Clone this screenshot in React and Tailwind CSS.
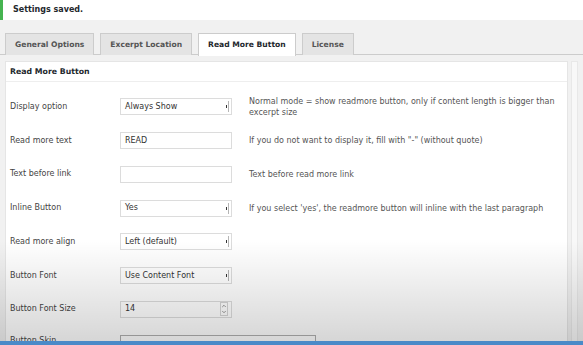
import { ChevronUp, ChevronDown } from 'lucide-react';

const tabs = [
  { label: 'General Options', active: false },
  { label: 'Excerpt Location', active: false },
  { label: 'Read More Button', active: true },
  { label: 'License', active: false }
];

const SelectBox = ({ value }) => (
  <div className="flex h-[17px] w-[112px] items-center justify-between border border-[#dcdcdc] bg-white pl-[4px] pr-[2px] text-[8px] text-[#333]">
    <span>{value}</span>
    <span className="flex h-[11px] w-[4px] items-center justify-center border-r border-[#b5b5b5]">
      <span className="h-[3px] w-[1.5px] bg-[#333]" />
    </span>
  </div>
);

const TextBox = ({ value }) => (
  <div className="flex h-[17px] w-[112px] items-center border border-[#dcdcdc] bg-white pl-[4px] text-[8px] text-[#333]">
    {value}
  </div>
);

const NumberBox = ({ value }) => (
  <div className="flex h-[17px] w-[112px] items-center justify-between border border-[#dcdcdc] bg-white pl-[4px] pr-[3px] text-[8px] text-[#333]">
    <span>{value}</span>
    <span className="flex flex-col items-center border border-[#d5d5d5] text-[#777]">
      <ChevronUp className="h-[6px] w-[6px]" strokeWidth={3} />
      <ChevronDown className="h-[6px] w-[6px]" strokeWidth={3} />
    </span>
  </div>
);

const rows = [
  { label: 'Display option', field: <SelectBox value="Always Show" />, desc: 'Normal mode = show readmore button, only if content length is bigger than excerpt size' },
  { label: 'Read more text', field: <TextBox value="READ" />, desc: 'If you do not want to display it, fill with "-" (without quote)' },
  { label: 'Text before link', field: <TextBox value="" />, desc: 'Text before read more link' },
  { label: 'Inline Button', field: <SelectBox value="Yes" />, desc: "If you select 'yes', the readmore button will inline with the last paragraph" },
  { label: 'Read more align', field: <SelectBox value="Left (default)" />, desc: '' },
  { label: 'Button Font', field: <SelectBox value="Use Content Font" />, desc: '' },
  { label: 'Button Font Size', field: <NumberBox value="14" />, desc: '' }
];

export default function App() {
  return (
    <div className="relative h-[345px] w-[583px] overflow-hidden bg-[#f1f1f1] font-['DejaVu_Sans',sans-serif]">
      {/* notice */}
      <div className="flex h-[20px] items-center border-l-[3px] border-[#46b450] bg-white pl-[10px] text-[8px] font-bold text-[#23282d]">
        Settings saved.
      </div>

      {/* tabs */}
      <div className="mt-[13px] flex h-[22px] gap-[6px] border-b border-[#cccccc] pl-[5px]">
        {tabs.map((t) => (
          <div
            key={t.label}
            className={`flex h-[22px] items-center border border-b-0 border-[#cccccc] px-[9px] text-[7.6px] font-bold ${
              t.active ? '-mb-px h-[23px] bg-white text-[#23282d]' : 'bg-[#e4e4e4] text-[#555]'
            }`}
          >
            {t.label}
          </div>
        ))}
      </div>

      <div className="mt-[6px] flex">
        {/* main panel */}
        <div className="ml-[5px] h-[300px] w-[563px] border border-[#e5e5e5] bg-white">
          <div className="flex h-[20px] items-center border-b border-[#eeeeee] pl-[4px] text-[7.8px] font-bold text-[#23282d]">
            Read More Button
          </div>
          <div className="pl-[4px] pt-[8px]">
            {rows.map((r) => (
              <div key={r.label} className="flex h-[33.75px] items-center">
                <div className="w-[110px] text-[8px] text-[#444]">{r.label}</div>
                {r.field}
                <div className="ml-[17px] w-[310px] text-[8px] leading-[11px] text-[#555]">{r.desc}</div>
              </div>
            ))}
            <div className="flex h-[33.5px] items-start pt-[9px]">
              <div className="w-[110px] text-[8px] text-[#444]">Button Skin</div>
              <div className="h-[30px] w-[196px] border border-[#b0b0b0] bg-white pl-[12px] pt-[5px]">
                <div className="h-[10px] w-[68px] rounded-[3px] bg-[#9bc26a]" />
              </div>
            </div>
          </div>
        </div>
        {/* side strip */}
        <div className="ml-[3px] h-[300px] w-[7px] border border-[#e8e8e8] bg-[#f8f8f8]" />
      </div>

      {/* bottom shade overlay */}
      <div className="pointer-events-none absolute bottom-[4px] left-0 h-[100px] w-full bg-gradient-to-b from-transparent to-[rgba(0,0,0,0.16)]" />
      {/* bottom bar */}
      <div className="absolute bottom-0 left-0 h-[4px] w-full bg-[#4a8ac8]" />
    </div>
  );
}
